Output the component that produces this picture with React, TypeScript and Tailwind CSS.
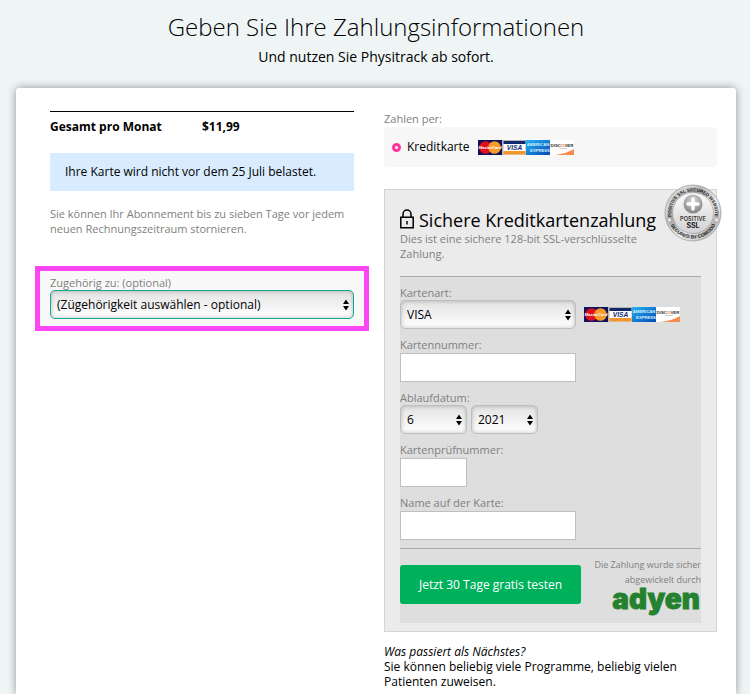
import { type ReactNode } from 'react';

const cardTypes = ['VISA', 'MasterCard', 'American Express', 'Discover'];
const months = ['1', '2', '3', '4', '5', '6', '7', '8', '9', '10', '11', '12'];
const years = ['2021', '2022', '2023', '2024', '2025'];

/** Strip with the four accepted card brands */
function CardLogos() {
  return (
    <svg width="96" height="15" viewBox="0 0 96 15" className="shrink-0" aria-hidden="true">
      {/* MasterCard */}
      <rect width="24" height="15" fill="#10125c" />
      <circle cx="7.5" cy="7.5" r="6.3" fill="#e0101c" />
      <circle cx="16.5" cy="7.5" r="6.3" fill="#f99a2c" />
      <text x="12" y="9.2" textAnchor="middle" fontFamily="Liberation Sans" fontSize="4.2" fontWeight="bold" fontStyle="italic" fill="#fff">
        MasterCard
      </text>
      {/* Visa */}
      <rect x="24" width="24" height="15" fill="#b9b4b4" />
      <rect x="25.5" y="1" width="22" height="13.5" fill="#fff" />
      <rect x="25.5" y="1" width="22" height="3" fill="#10296c" />
      <rect x="25.5" y="11" width="22" height="3.5" fill="#f3952d" />
      <text x="36.5" y="10" textAnchor="middle" fontFamily="Liberation Sans" fontSize="6.6" fontWeight="bold" fontStyle="italic" fill="#10296c">
        VISA
      </text>
      {/* American Express */}
      <linearGradient id="amex" x1="0" y1="0" x2="1" y2="1">
        <stop offset="0" stopColor="#25b4f2" />
        <stop offset="1" stopColor="#0549b4" />
      </linearGradient>
      <rect x="48" width="24" height="15" fill="url(#amex)" />
      <text x="60" y="6.4" textAnchor="middle" fontFamily="Liberation Sans" fontSize="4.2" fontWeight="bold" fill="#d5efff">
        AMERICAN
      </text>
      <text x="62" y="11.6" textAnchor="middle" fontFamily="Liberation Sans" fontSize="4.2" fontWeight="bold" fill="#d5efff">
        EXPRESS
      </text>
      {/* Discover */}
      <rect x="72" width="24" height="15" fill="#fff" />
      <path d="M96 9v6H77c8-1 14-3 19-6z" fill="#fb8b4b" />
      <text x="84" y="6.8" textAnchor="middle" fontFamily="Liberation Sans" fontSize="4.4" fontWeight="bold" fill="#333">
        DISC<tspan fill="#f47a2c">O</tspan>VER
      </text>
      <rect x="81" y="8" width="8" height="1" fill="#ccc" />
    </svg>
  );
}

function SslSeal() {
  return (
    <svg width="58" height="58" viewBox="0 0 58 58" aria-hidden="true">
      <defs>
        <linearGradient id="ring" x1="0" y1="0" x2="1" y2="1">
          <stop offset="0" stopColor="#7c7c7c" />
          <stop offset="0.2" stopColor="#d0d0d0" />
          <stop offset="0.35" stopColor="#a0a0a0" />
          <stop offset="0.6" stopColor="#f0f0f0" />
          <stop offset="0.8" stopColor="#b0b0b0" />
          <stop offset="1" stopColor="#d9d9d9" />
        </linearGradient>
        <linearGradient id="face" x1="0" y1="0" x2="0" y2="1">
          <stop offset="0" stopColor="#fafafa" />
          <stop offset="1" stopColor="#d2d2d2" />
        </linearGradient>
        <radialGradient id="ball" cx="0.5" cy="0.3" r="0.7">
          <stop offset="0" stopColor="#d8d8d8" />
          <stop offset="1" stopColor="#828282" />
        </radialGradient>
        <path id="arcTop" d="M8.6 37.5A22 22 0 1 1 49.4 37.5" />
        <path id="arcBottom" d="M3.8 33A25.5 25.5 0 0 0 54.2 33" />
      </defs>
      <circle cx="29" cy="29" r="28" fill="url(#ring)" stroke="#b2b2b2" />
      <circle cx="29" cy="29" r="26.5" fill="none" stroke="#ececec" strokeWidth="0.6" />
      <circle cx="29" cy="29" r="20.5" fill="url(#face)" stroke="#999" strokeWidth="0.6" />
      <circle cx="29" cy="20" r="9.5" fill="url(#ball)" />
      <path d="M29 15v10M24 20h10" stroke="#fff" strokeWidth="3.4" strokeLinecap="round" />
      <circle cx="5.5" cy="36" r="2" fill="#eee" stroke="#999" strokeWidth="0.6" />
      <circle cx="52.5" cy="36" r="2" fill="#eee" stroke="#999" strokeWidth="0.6" />
      <text fontFamily="Liberation Sans" fontSize="4.5" fontWeight="bold" fill="#222">
        <textPath href="#arcTop" startOffset="50%" textAnchor="middle">
          POSITIVE SSL SECURED WEBSITE
        </textPath>
      </text>
      <text fontFamily="Liberation Sans" fontSize="4.8" fontWeight="bold" fill="#222">
        <textPath href="#arcBottom" startOffset="50%" textAnchor="middle">
          SECURED BY COMODO
        </textPath>
      </text>
      <text x="29" y="37" textAnchor="middle" fontFamily="Inter" fontSize="5.6" fontWeight="600" fill="#333">
        POSITIVE
      </text>
      <text x="29" y="44" textAnchor="middle" fontFamily="Inter" fontSize="7" fontWeight="700" fill="#222">
        SSL
      </text>
    </svg>
  );
}

function LockIcon() {
  return (
    <svg width="14" height="20" viewBox="0 0 14 20" fill="none" stroke="#000" strokeWidth="1.5" aria-hidden="true">
      <path d="M0.8 8.2h12.4v10.6H0.8z" />
      <path d="M3 8V5a4 4 0 0 1 8 0v3" />
      <path d="M7 12v3.4" />
    </svg>
  );
}

interface SelectProps {
  id: string;
  options: string[];
  value: string;
  label?: string;
  className: string;
}

/** Native select with the double arrow on the right */
function Select({ id, options, value, label, className }: SelectProps) {
  return (
    <div className={`relative h-[29px] ${className}`}>
      <select
        id={id}
        aria-label={label}
        defaultValue={value}
        className="h-full w-full appearance-none rounded-[5px] border border-inherit bg-linear-to-b from-[#e3e3e3] to-white pr-5 pl-[6px] text-xs shadow-[inset_0_0_4px_rgba(0,0,0,0.25)]"
      >
        {options.map((option) => (
          <option key={option}>{option}</option>
        ))}
      </select>
      <svg width="6" height="12" viewBox="0 0 6 12" className="pointer-events-none absolute top-[9px] right-[5px]" aria-hidden="true">
        <path d="M3 0.5l3 4.5H0zM3 11.5L6 7H0z" />
      </svg>
    </div>
  );
}

function Field({ id, label, children }: { id: string; label: string; children: ReactNode }) {
  return (
    <div className="mb-2">
      <label htmlFor={id} className="block text-[11px] leading-[15px] text-[#808080]">
        {label}
      </label>
      {children}
    </div>
  );
}

function TextInput({ id, className }: { id: string; className: string }) {
  return <input id={id} type="text" className={`mt-px block h-[29px] border border-[#bfbfbf] bg-white px-2 text-xs ${className}`} />;
}

function Summary() {
  return (
    <section>
      <div className="flex border-t border-black pt-[7px] text-xs leading-4 font-bold">
        <span className="w-1/2">Gesamt pro Monat</span>
        <span>$11,99</span>
      </div>

      <p className="mt-[18px] bg-[#d9ecff] px-[15px] py-[11px] text-xs leading-4">Ihre Karte wird nicht vor dem 25 Juli belastet.</p>

      <p className="mt-[15px] text-[11px] leading-[15px] text-[#808080]">
        Sie können Ihr Abonnement bis zu sieben Tage vor jedem neuen Rechnungszeitraum stornieren.
      </p>

      {/* Highlighted affiliation picker */}
      <div className="-mx-[15px] mt-[30px] border-[5px] border-[#ff46f6] bg-[#f8f8f8] px-[10px] pt-1 pb-[7px]">
        <label htmlFor="affiliation" className="block text-[11px] leading-[15px] text-[#808080]">
          Zugehörig zu: (optional)
        </label>
        <Select
          id="affiliation"
          className="border-[#0fa890]"
          value="(Zügehörigkeit auswählen - optional)"
          options={['(Zügehörigkeit auswählen - optional)']}
        />
      </div>
    </section>
  );
}

function PaymentForm() {
  return (
    <form className="relative mt-[22px] border border-[#d4d4d4] bg-[#ebebeb] px-[15px] pt-[19px] pb-2">
      <div className="absolute -top-[6px] -right-[6px]">
        <SslSeal />
      </div>

      <h2 className="flex items-start gap-[5px] text-lg leading-[22px] whitespace-nowrap">
        <LockIcon />
        Sichere Kreditkartenzahlung
      </h2>
      <p className="pr-10 text-[11px] leading-[15px] text-[#808080]">Dies ist eine sichere 128-bit SSL-verschlüsselte Zahlung.</p>

      <div className="mt-[15px] border-t border-[#a9a9a9] bg-[#dedede] pt-2 pb-2">
        <Field id="card-type" label="Kartenart:">
          <div className="flex items-center gap-2">
            <Select id="card-type" className="w-44 border-[#bfbfbf]" value="VISA" options={cardTypes} />
            <CardLogos />
          </div>
        </Field>
        <Field id="card-number" label="Kartennummer:">
          <TextInput id="card-number" className="w-44" />
        </Field>
        <Field id="month" label="Ablaufdatum:">
          <div className="flex gap-1">
            <Select id="month" className="w-[67px] border-[#bfbfbf]" value="6" options={months} />
            <Select id="year" label="Jahr" className="w-[67px] border-[#bfbfbf]" value="2021" options={years} />
          </div>
        </Field>
        <Field id="cvc" label="Kartenprüfnummer:">
          <TextInput id="cvc" className="w-[67px]" />
        </Field>
        <Field id="holder" label="Name auf der Karte:">
          <TextInput id="holder" className="w-44" />
        </Field>

        <div className="flex items-start justify-between border-t border-[#a9a9a9] pt-2">
          <button type="submit" className="mt-2 h-[39px] rounded-[3px] bg-[#00b15c] px-[19px] text-xs font-medium whitespace-nowrap text-white">
            Jetzt 30 Tage gratis testen
          </button>
          <div className="flex flex-col items-end text-right text-[9px] leading-[15px] whitespace-nowrap text-[#808080]">
            <span>Die Zahlung wurde sicher</span>
            <span>abgewickelt durch</span>
            <svg width="90" height="28" viewBox="0 0 90 28" className="overflow-visible" role="img" aria-label="adyen">
              <text x="89" y="22" textAnchor="end" fontFamily="Inter" fontSize="28" fontWeight="900" fill="#24812f" stroke="#24812f" strokeWidth="0.8">
                adyen
              </text>
            </svg>
          </div>
        </div>
      </div>
    </form>
  );
}

export default function App() {
  return (
    <div className="flex min-h-screen flex-col bg-[#eff5f5] pt-[9px] pr-[14px] pl-4 font-['Open_Sans',sans-serif] text-black">
      <header className="text-center">
        <h1 className="text-2xl leading-9 font-light">Geben Sie Ihre Zahlungsinformationen</h1>
        <p className="mt-[2px] text-sm leading-5">Und nutzen Sie Physitrack ab sofort.</p>
      </header>

      <main className="mt-[21px] grid flex-1 grid-cols-[304fr_333fr] gap-[30px] rounded-t-[3px] bg-white pt-[23px] pr-[19px] pl-[34px] shadow-[0_0_8px_rgba(0,0,0,0.4)]">
        <Summary />

        <section>
          <fieldset>
            <legend className="text-[11px] leading-4 text-[#808080]">Zahlen per:</legend>
            <div className="flex h-10 items-center rounded-[4px] bg-[#f7f7f7] px-2">
              <label className="flex items-center gap-[6px] text-xs">
                <input type="radio" name="method" defaultChecked className="size-[9px] appearance-none rounded-full border-[3px] border-[#ff3399] bg-white" />
                Kreditkarte
              </label>
              <div className="ml-2">
                <CardLogos />
              </div>
            </div>
          </fieldset>

          <PaymentForm />

          <div className="mt-3 text-xs leading-[15px]">
            <p className="italic">Was passiert als Nächstes?</p>
            <p>Sie können beliebig viele Programme, beliebig vielen Patienten zuweisen.</p>
          </div>
        </section>
      </main>
    </div>
  );
}
